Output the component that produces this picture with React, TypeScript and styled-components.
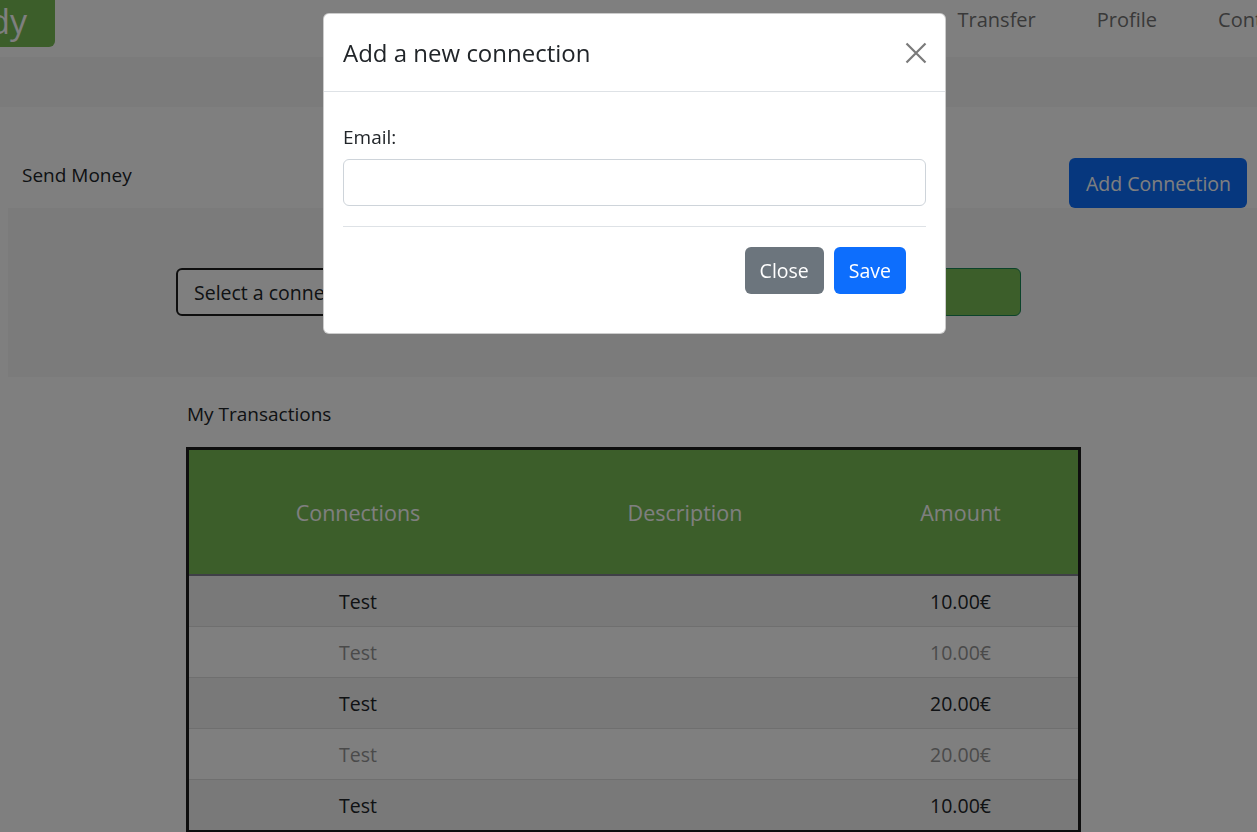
import React from "react";
import styled, { createGlobalStyle } from "styled-components";

const GREEN = "#78bc54";

const GlobalStyle = createGlobalStyle`
  * { box-sizing: border-box; }
  html, body { margin: 0; padding: 0; background: #fff; overflow: hidden; }
  body {
    font-family: "Open Sans", "Noto Sans", sans-serif;
    font-size: 19px;
    color: #212529;
  }
`;

const Page = styled.div`
  width: 1257px;
  height: 832px;
  overflow: hidden;
`;

const Navbar = styled.nav`
  display: flex;
  align-items: flex-start;
  height: 57px;
  background: #fff;
  white-space: nowrap;
`;

const Brand = styled.div`
  flex: 0 0 55px;
  height: 47px;
  display: flex;
  justify-content: flex-end;
  overflow: hidden;
  padding-right: 28px;
  background: ${GREEN};
  color: #fff;
  font-size: 34px;
  line-height: 42px;
  border-bottom-right-radius: 6px;
`;

const NavList = styled.ul`
  display: flex;
  gap: 61px;
  margin: 0 0 0 785px;
  padding: 0;
  list-style: none;
  flex-shrink: 0;
`;

const NavLink = styled.li`
  line-height: 40px;
  color: #737373;
  font-size: 20px;
`;

const Strip = styled.div`
  height: 50px;
  background: #f6f6f6;
`;

const HeadRow = styled.div`
  height: 101px;
  display: flex;
  justify-content: space-between;
  align-items: flex-end;
  padding: 0 10px 0 22px;
`;

const SectionTitle = styled.div`
  line-height: 30px;
  margin-bottom: 18px;
`;

const PrimaryButton = styled.button`
  height: 50px;
  padding: 0 16px 0 17px;
  border: none;
  border-radius: 6px;
  background: #0d6efd;
  color: #fff;
  font-family: inherit;
  font-size: 19.5px;
`;

const Panel = styled.div`
  margin-left: 8px;
  height: 169px;
  background: #f6f6f6;
  display: flex;
  align-items: flex-start;
  gap: 10px;
  padding: 60px 0 0 168px;
`;

const Select = styled.select`
  appearance: none;
  width: 755px;
  height: 48px;
  border: 2px solid #1c1c1c;
  border-radius: 6px;
  background: #fff;
  padding: 0 16px;
  font-family: inherit;
  font-size: 19.5px;
  color: #212529;
`;

const GreenButton = styled.button`
  width: 80px;
  height: 48px;
  border: 1px solid #198754;
  border-radius: 6px;
  background: ${GREEN};
`;

const TransactionsTitle = styled.div`
  line-height: 30px;
  margin: 22px 0 18px 187px;
`;

const Table = styled.table`
  margin-left: 186px;
  width: 895px;
  border-collapse: collapse;
  border: 3px solid #1c1c1c;
  table-layout: fixed;
`;

const Th = styled.th<{ $w: number }>`
  box-sizing: content-box;
  width: ${(p) => p.$w}px;
  height: 124px;
  background: ${GREEN};
  color: #fff;
  font-weight: 400;
  font-size: 21.5px;
  text-align: center;
  border-bottom: 2px solid #7e7e8c;
  padding: 0;
`;

const Tr = styled.tr<{ $striped: boolean }>`
  background: ${(p) => (p.$striped ? "#f2f2f2" : "#fff")};
  color: ${(p) => (p.$striped ? "#212529" : "#959595")};
`;

const Td = styled.td`
  box-sizing: content-box;
  height: 50px;
  padding: 0;
  text-align: center;
  border-bottom: 1px solid #dedede;
  font-size: 19.5px;
`;

const Backdrop = styled.div`
  position: fixed;
  inset: 0;
  background: rgba(0, 0, 0, 0.5);
  display: flex;
  align-items: flex-start;
  padding: 13px 0 0 323px;
`;

const Dialog = styled.div`
  width: 623px;
  background: #fff;
  border: 1px solid rgba(0, 0, 0, 0.2);
  border-radius: 6px;
  color: #212529;
`;

const DialogHeader = styled.div`
  height: 78px;
  display: flex;
  align-items: center;
  justify-content: space-between;
  padding: 1px 18px 0 19px;
  border-bottom: 1px solid #dee2e6;
`;

const DialogTitle = styled.h5`
  margin: 0;
  font-size: 24px;
  font-weight: 400;
  line-height: 1.2;
`;

const CloseIcon = styled.button`
  width: 22px;
  height: 22px;
  padding: 0;
  border: none;
  background: none;
  display: flex;
`;

const DialogBody = styled.div`
  padding: 30px 19px 0;
`;

const Label = styled.label`
  display: block;
  line-height: 30px;
  margin-bottom: 7px;
`;

const Input = styled.input`
  display: block;
  width: 100%;
  height: 47px;
  border: 1px solid #ced4da;
  border-radius: 6px;
  font-family: inherit;
  font-size: 19.5px;
  padding: 0 15px;
`;

const Divider = styled.hr`
  margin: 20px 0 0;
  border: 0;
  border-top: 1px solid #dee2e6;
`;

const DialogFooter = styled.div`
  display: flex;
  justify-content: flex-end;
  gap: 10px;
  padding: 20px 39px 39px;
`;

const ModalButton = styled.button<{ $variant: "secondary" | "primary" }>`
  height: 47px;
  padding: 0 15px;
  border: none;
  border-radius: 6px;
  background: ${(p) => (p.$variant === "primary" ? "#0d6efd" : "#6c757d")};
  color: #fff;
  font-family: inherit;
  font-size: 19.5px;
`;

const rows = [
  { who: "Test", desc: "", amount: "10.00€" },
  { who: "Test", desc: "", amount: "10.00€" },
  { who: "Test", desc: "", amount: "20.00€" },
  { who: "Test", desc: "", amount: "20.00€" },
  { who: "Test", desc: "", amount: "10.00€" },
];

export default function App() {
  return (
    <>
      <GlobalStyle />
      <Page>
        <Navbar>
          <Brand>Buddy</Brand>
          <NavList>
            <NavLink>Home</NavLink>
            <NavLink>Transfer</NavLink>
            <NavLink>Profile</NavLink>
            <NavLink>Contact</NavLink>
          </NavList>
        </Navbar>
        <Strip />
        <HeadRow>
          <SectionTitle>Send Money</SectionTitle>
          <PrimaryButton>Add Connection</PrimaryButton>
        </HeadRow>
        <Panel>
          <Select defaultValue="">
            <option value="">Select a connection</option>
          </Select>
          <GreenButton aria-label="Pay" />
        </Panel>
        <TransactionsTitle>My Transactions</TransactionsTitle>
        <Table>
          <thead>
            <tr>
              <Th $w={338}>Connections</Th>
              <Th $w={316}>Description</Th>
              <Th $w={235}>Amount</Th>
            </tr>
          </thead>
          <tbody>
            {rows.map((r, i) => (
              <Tr key={i} $striped={i % 2 === 0}>
                <Td>{r.who}</Td>
                <Td>{r.desc}</Td>
                <Td>{r.amount}</Td>
              </Tr>
            ))}
          </tbody>
        </Table>
      </Page>
      <Backdrop>
        <Dialog role="dialog">
          <DialogHeader>
            <DialogTitle>Add a new connection</DialogTitle>
            <CloseIcon aria-label="Close">
              <svg width="22" height="22" viewBox="0 0 22 22">
                <path d="M1.5 1.5 L20.5 20.5 M20.5 1.5 L1.5 20.5" stroke="#7a7a7a" strokeWidth="2.2" fill="none" />
              </svg>
            </CloseIcon>
          </DialogHeader>
          <DialogBody>
            <Label>Email:</Label>
            <Input type="email" />
            <Divider />
          </DialogBody>
          <DialogFooter>
            <ModalButton $variant="secondary">Close</ModalButton>
            <ModalButton $variant="primary">Save</ModalButton>
          </DialogFooter>
        </Dialog>
      </Backdrop>
    </>
  );
}
